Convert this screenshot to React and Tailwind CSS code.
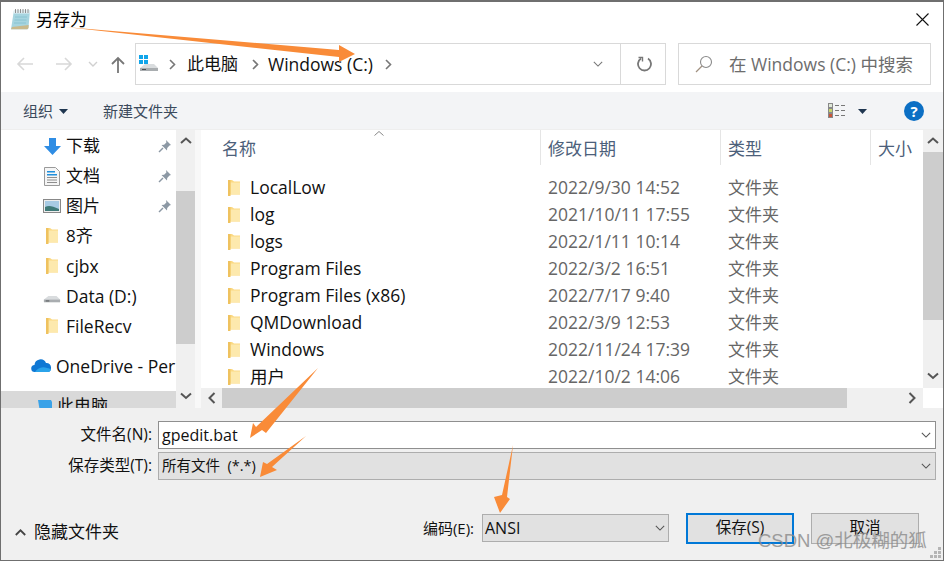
import React from "react";

const FONT = { fontFamily: '"Open Sans","Noto Sans CJK SC",sans-serif' };

function Folder({ className = "" }) {
  return (
    <svg width="14" height="18" viewBox="0 0 14 18" className={className}>
      <path d="M1 1h4l2 1.5h6v13H3.5L1 17z" fill="#fbd984" />
      <path d="M3.5 3.5H13v12H3.5z" fill="#fde9ad" />
      <path d="M1 1h2.5v16L1 17z" fill="#efc25f" />
    </svg>
  );
}

function Pin() {
  return (
    <svg width="14" height="14" viewBox="0 0 14 14">
      <path d="M8 1l5 5-1.5.6-2.3 2.3-.2 2.6-5.5-5.5 2.6-.2L8.4 3.5z" fill="#8c98a4" />
      <path d="M5 9L1 13" stroke="#8c98a4" strokeWidth="1.4" />
    </svg>
  );
}

function Drive({ win = false }) {
  return (
    <svg width="20" height="18" viewBox="0 0 20 18">
      {win && (
        <g fill="#10a5ea">
          <rect x="0" y="0" width="4" height="4" />
          <rect x="5" y="0" width="4" height="4" />
          <rect x="0" y="5" width="4" height="4" />
          <rect x="5" y="5" width="4" height="4" />
        </g>
      )}
      <path d="M1 13l5-4h9l4 4v2H1z" fill="#d9dcde" />
      <path d="M1 13h18v3H1z" fill="#a9adb0" />
      <rect x="3" y="14" width="4" height="1" fill="#4b4f52" />
    </svg>
  );
}

function SbChevron({ dir }) {
  const d = { up: "M1 6l5-4.5L11 6", down: "M1 1.5L6 6l5-4.5" }[dir];
  return (
    <svg width="12" height="8" viewBox="0 0 12 8" fill="none" stroke="#555" strokeWidth="2">
      <path d={d} />
    </svg>
  );
}

function SmallChevron({ color = "#555" }) {
  return (
    <svg width="10" height="6" viewBox="0 0 12 7" fill="none" stroke={color} strokeWidth="1.3">
      <path d="M1 1l5 5 5-5" />
    </svg>
  );
}

function Crumb() {
  return (
    <svg width="7" height="11" viewBox="0 0 7 11" fill="none" stroke="#777" strokeWidth="1.6">
      <path d="M1 1l4.5 4.5L1 10" />
    </svg>
  );
}

function NavBtn({ d, color }) {
  return (
    <svg width="18" height="16" viewBox="0 0 18 16" fill="none" stroke={color} strokeWidth="1.6">
      <path d={d} />
    </svg>
  );
}

function SideRow({ icon, label, pin, latin }) {
  return (
    <div className="h-[30px] shrink-0 flex items-center pl-[42px]">
      <div className="w-[18px] shrink-0 flex justify-center mr-[5px]">{icon}</div>
      <span className={`${latin ? "text-[17.5px]" : "text-[17px]"} text-[#111] flex-1 whitespace-nowrap overflow-hidden`}>{label}</span>
      {pin && <div className="pr-[4px] flex"><Pin /></div>}
    </div>
  );
}

const files = [
  ["LocalLow", "2022/9/30 14:52"],
  ["log", "2021/10/11 17:55"],
  ["logs", "2022/1/11 10:14"],
  ["Program Files", "2022/3/2 16:51"],
  ["Program Files (x86)", "2022/7/17 9:40"],
  ["QMDownload", "2022/3/9 12:53"],
  ["Windows", "2022/11/24 17:39"],
  ["用户", "2022/10/2 14:06"],
];

function FileRow({ name, date }) {
  return (
    <div className="h-[27px] shrink-0 flex items-center whitespace-nowrap">
      <div className="w-[49px] shrink-0 flex pl-[26px]"><Folder /></div>
      <span className="w-[298px] shrink-0 text-[17.5px] text-[#111]">{name}</span>
      <span className="w-[180px] shrink-0 text-[17.5px] text-[#666]">{date}</span>
      <span className="text-[17px] text-[#666]">文件夹</span>
    </div>
  );
}

function Doc() {
  return (
    <svg width="16" height="19" viewBox="0 0 16 19">
      <path d="M.5.5h11l4 4v14H.5z" fill="#f5f5f5" stroke="#9a9a9a" />
      <path d="M3 4h8v1.5H3zM3 7h10v1.5H3z" fill="#1f8fdc" />
      <path d="M3 10h10v1H3zM3 12.5h10v1H3zM3 15h10v1H3z" fill="#8d8d8d" />
    </svg>
  );
}

function Pic() {
  return (
    <svg width="18" height="14" viewBox="0 0 18 14">
      <rect x=".5" y=".5" width="17" height="13" fill="#eee" stroke="#888" />
      <rect x="2" y="2" width="14" height="10" fill="#a8cbe4" />
      <path d="M2 8c4-2 7-1 14 2v2H2z" fill="#3f7a78" />
    </svg>
  );
}

export default function App() {
  return (
    <div style={FONT} className="relative w-[944px] h-[561px] overflow-hidden bg-white border border-[#6f6f6f] border-t-2 flex flex-col">
      {/* title */}
      <div className="h-[41px] shrink-0 flex items-center pl-[9px] pr-[14px] pb-[6px]">
        <svg width="21" height="22" viewBox="0 0 21 22">
          <path d="M4 1h16l-1.500 17.500c0 1-.8 1.800-1.800 1.800H1z" fill="#a6d5e0" />
          <path d="M1 20.300h15.700c1 0 1.800-.8 1.800-1.800l.2-2.500L2 18z" fill="#c9b98c" />
          <path d="M4 1h16l-.3 3.500H3.500z" fill="#e4f0f3" />
          <path d="M5.500 0v4M8 0v4M10.500 0v4M13 0v4M15.500 0v4M18 0v4" stroke="#777" strokeWidth="0.8" />
          <path d="M5 8h12M4.500 11h12M4 14h12" stroke="#84bfce" strokeWidth="0.8" />
        </svg>
        <span className="ml-[5px] text-[17px] text-black">另存为</span>
        <svg width="13" height="13" viewBox="0 0 13 13" className="ml-auto" fill="none" stroke="#111" strokeWidth="1.1">
          <path d="M.5.5l12 12M12.500.5l-12 12" />
        </svg>
      </div>

      {/* nav */}
      <div className="h-[49px] shrink-0 flex items-start pr-[12px]">
        <div className="w-[134px] h-[42px] shrink-0 flex items-center pl-[15px]">
          <NavBtn color="#d8d8d8" d="M17 8H2M8 2L2 8l6 6" />
          <span className="w-[21px]" />
          <NavBtn color="#d8d8d8" d="M1 8h15M10 2l6 6-6 6" />
          <span className="w-[15px]" />
          <svg width="10" height="6" viewBox="0 0 10 6" fill="none" stroke="#d0d0d0" strokeWidth="1.4"><path d="M1 1l4 4 4-4" /></svg>
          <span className="w-[13px]" />
          <svg width="14" height="17" viewBox="0 0 14 17" fill="none" stroke="#777" strokeWidth="1.8"><path d="M7 17V2M1 8l6-6 6 6" /></svg>
        </div>
        <div className="w-[531px] h-[42px] shrink-0 border border-[#d9d9d9] flex items-center">
          <div className="flex items-center pl-[3px] flex-1">
            <Drive win />
            <span className="ml-[10px] flex"><Crumb /></span>
            <span className="ml-[11px] text-[17px] text-[#111]">此电脑</span>
            <span className="ml-[14px] flex"><Crumb /></span>
            <span className="ml-[9px] text-[17.5px] text-[#111]">Windows (C:)</span>
            <span className="ml-[12px] flex"><Crumb /></span>
          </div>
          <div className="w-[45px] h-full flex items-center justify-center">
            <SmallChevron color="#777" />
          </div>
          <div className="w-[45px] h-full border-l border-[#d9d9d9] flex items-center justify-center pl-[3px]">
            <svg width="16" height="16" viewBox="0 0 16 16" fill="none" stroke="#777" strokeWidth="1.8">
              <path d="M4 2.500A6.500 6.500 0 1 0 11 2.500" />
              <path d="M1.500 1.500h4v4" strokeWidth="1.400" />
            </svg>
          </div>
        </div>
        <div className="ml-[12px] flex-1 h-[42px] border border-[#d9d9d9] flex items-center pl-[16px]">
          <svg width="18" height="18" viewBox="0 0 18 18" fill="none" stroke="#8a8a8a" strokeWidth="1.1">
            <circle cx="11" cy="7" r="5.500" />
            <path d="M7 11l-6 6" stroke="#a09080" strokeWidth="1.300" />
          </svg>
          <span className="ml-[16px] text-[17.5px] text-[#6d6d6d] whitespace-nowrap">在 Windows (C:) 中搜索</span>
        </div>
      </div>

      {/* toolbar */}
      <div className="h-[38px] shrink-0 bg-[#f3f4f6] flex items-center pl-[22px] pr-[19px] pt-[1px] border-b border-[#eeeeee]">
        <span className="text-[15px] text-[#3b4a5c]">组织</span>
        <svg width="9" height="5" viewBox="0 0 9 5" className="ml-[6px]"><path d="M0 0h9L4.500 5z" fill="#1f3650" /></svg>
        <span className="ml-[35px] text-[15px] text-[#3b4a5c]">新建文件夹</span>
        <svg width="18" height="16" viewBox="0 0 18 16" className="ml-auto" fill="none">
          <rect x=".5" y=".5" width="4" height="4" stroke="#888" fill="#dfe8d8" />
          <rect x=".5" y="5.500" width="4" height="4" stroke="#888" fill="#c9d66a" />
          <rect x=".5" y="10.500" width="4" height="4" stroke="#888" fill="#c9553a" />
          <path d="M7 2.500h4M13 2.500h4M7 7.500h4M13 7.500h4M7 12.500h4M13 12.500h4" stroke="#777" />
        </svg>
        <svg width="9" height="5" viewBox="0 0 9 5" className="ml-[12px]"><path d="M0 0h9L4.500 5z" fill="#1f3650" /></svg>
        <div className="ml-[37px] w-[20px] h-[20px] rounded-full bg-[#0c6fc4] flex items-center justify-center text-white text-[15px] font-bold leading-none">?</div>
      </div>

      {/* main */}
      <div className="h-[278px] shrink-0 flex overflow-hidden">
        {/* sidebar */}
        <div className="w-[175px] shrink-0 flex flex-col overflow-hidden pt-[1px]">
          <SideRow pin label="下载" icon={
            <svg width="17" height="17" viewBox="0 0 17 17"><path d="M5 0h7v8h5l-8.500 9L0 8h5z" fill="#2f8de4" /></svg>
          } />
          <SideRow pin label="文档" icon={<Doc />} />
          <SideRow pin label="图片" icon={<Pic />} />
          <SideRow label="8齐" icon={<Folder />} />
          <SideRow latin label="cjbx" icon={<Folder />} />
          <SideRow latin label="Data (D:)" icon={<Drive />} />
          <SideRow latin label="FileRecv" icon={<Folder />} />
          <div className="h-[10px] shrink-0" />
          <div className="h-[30px] shrink-0 flex items-center pl-[30px]">
            <svg width="21" height="14" viewBox="0 0 21 14">
              <path d="M4 13a3.500 3.500 0 0 1-.5-7A6 6 0 0 1 15 4a4.500 4.500 0 0 1 5 5c0 2-1 4-3 4z" fill="#0f78d4" />
              <path d="M4 13c2-3 6-6 12-4 2 0 4 1 4 2l-2 2z" fill="#2aa3ea" />
            </svg>
            <span className="ml-[4px] text-[17.5px] text-[#111] whitespace-nowrap">OneDrive - Per</span>
          </div>
          <div className="h-[10px] shrink-0" />
          <div className="h-[30px] shrink-0 bg-[#d9d9d9] flex items-center pl-[37px]">
            <svg width="14" height="12" viewBox="0 0 14 12"><path d="M0 0h13l1 2v10H2z" fill="#3aa2e8" /></svg>
            <span className="ml-[5px] text-[17px] text-[#111]">此电脑</span>
          </div>
        </div>
        {/* sidebar scrollbar */}
        <div className="w-[19px] shrink-0 bg-[#f0f0f0] flex flex-col items-center">
          <div className="h-[21px] shrink-0 flex items-center justify-center"><SbChevron dir="up" /></div>
          <div className="w-full h-[153px] shrink-0 mt-[40px] bg-[#cdcdcd]" />
          <div className="mt-auto h-[24px] shrink-0 flex items-center justify-center"><SbChevron dir="down" /></div>
        </div>
        <div className="w-[6px] shrink-0 bg-[#f8f8f8]" />
        {/* file list */}
        <div className="flex-1 min-w-0 flex flex-col">
          <div className="flex-1 min-h-0 flex">
            <div className="flex-1 min-w-0 flex flex-col overflow-hidden">
              <div className="h-[44px] shrink-0 flex relative">
                <div className="w-[340px] h-[35px] pt-[2px] shrink-0 border-r border-[#e5e5e5] pl-[21px] flex items-center text-[17px] text-[#4c607a]">名称</div>
                <div className="w-[180px] h-[35px] pt-[2px] shrink-0 border-r border-[#e5e5e5] pl-[7px] flex items-center text-[17px] text-[#4c607a]">修改日期</div>
                <div className="w-[150px] h-[35px] pt-[2px] shrink-0 border-r border-[#e5e5e5] pl-[7px] flex items-center text-[17px] text-[#4c607a]">类型</div>
                <div className="pl-[7px] h-[35px] pt-[2px] flex items-center text-[17px] text-[#4c607a] whitespace-nowrap">大小</div>
                <svg width="10" height="5" viewBox="0 0 10 5" className="absolute left-[173px] top-[1px]" fill="none" stroke="#888"><path d="M0.500 4.500L5 .5l4.500 4" /></svg>
              </div>
              <div className="flex flex-col">
                {files.map(([n, d]) => <FileRow key={n} name={n} date={d} />)}
              </div>
            </div>
            <div className="w-[20px] shrink-0 bg-[#f0f0f0] flex flex-col items-center">
              <div className="h-[22px] shrink-0 flex items-center justify-center"><SbChevron dir="up" /></div>
              <div className="w-full h-[168px] shrink-0 bg-[#cdcdcd]" />
              <div className="mt-auto h-[24px] shrink-0 flex items-center justify-center"><SbChevron dir="down" /></div>
            </div>
          </div>
          <div className="h-[20px] shrink-0 bg-[#f0f0f0] flex items-center mr-[20px]">
            <div className="w-[21px] h-full shrink-0 flex items-center justify-center">
              <svg width="8" height="12" viewBox="0 0 8 12" fill="none" stroke="#555" strokeWidth="2"><path d="M6.500 1L1.500 6l5 5" /></svg>
            </div>
            <div className="w-[625px] h-full shrink-0 bg-[#cdcdcd]" />
            <div className="ml-auto w-[23px] h-full flex items-center justify-center">
              <svg width="8" height="12" viewBox="0 0 8 12" fill="none" stroke="#555" strokeWidth="2"><path d="M1.500 1l5 5-5 5" /></svg>
            </div>
          </div>
        </div>
      </div>

      {/* bottom */}
      <div className="flex-1 min-h-0 bg-[#f0f0f0] flex flex-col pr-[7px]">
        <div className="h-[28px] mt-[13px] shrink-0 flex items-center">
          <label className="w-[151px] shrink-0 text-right text-[15.5px] text-[#111]">文件名(N):</label>
          <div className="ml-[6px] flex-1 h-full bg-white border border-[#8f8f8f] flex items-center pl-[3px] pr-[4px]">
            <span className="text-[16px] text-[#111]">gpedit.bat</span>
            <span className="ml-auto flex"><SmallChevron /></span>
          </div>
        </div>
        <div className="h-[28px] mt-[3px] shrink-0 flex items-center">
          <label className="w-[151px] shrink-0 text-right text-[15.5px] text-[#111]">保存类型(T):</label>
          <div className="ml-[6px] flex-1 h-full bg-[#e1e1e1] border border-[#adadad] flex items-center pl-[3px] pr-[4px]">
            <span className="text-[14.500px] text-[#111] whitespace-pre">所有文件  (*.*)</span>
            <span className="ml-auto flex"><SmallChevron /></span>
          </div>
        </div>
        <div className="mt-[32px] h-[32px] shrink-0 flex items-center pl-[14px] pr-[17px]">
          <svg width="11" height="7" viewBox="0 0 11 7" fill="none" stroke="#444" strokeWidth="1.800" className="mt-[8px]"><path d="M.8 6l4.700-4.700L10.200 6" /></svg>
          <span className="ml-[8px] mt-[8px] text-[17px] text-[#111]">隐藏文件夹</span>
          <span className="ml-auto text-[15px] text-[#111]">编码(E):</span>
          <div className="ml-[8px] w-[187px] h-[28px] bg-[#e1e1e1] border border-[#adadad] flex items-center pl-[2px] pr-[3px]">
            <span className="text-[16px] text-[#111]">ANSI</span>
            <span className="ml-auto flex"><SmallChevron /></span>
          </div>
          <div className="ml-[17px] w-[108px] h-[31px] bg-[#e1e1e1] border-2 border-[#0078d7] flex items-center justify-center text-[15.500px] text-[#111]">保存(S)</div>
          <div className="ml-[17px] w-[108px] h-[31px] bg-[#e1e1e1] border border-[#adadad] flex items-center justify-center text-[15.500px] text-[#111]">取消</div>
        </div>
      </div>

      {/* annotation arrows */}
      <svg width="944" height="561" viewBox="0 0 944 561" className="absolute left-[-1px] top-[-2px] pointer-events-none">
        <g fill="#f98b38">
          <polygon points="65,27 339,50 339,45 355,54 339,62 339,57" />
          <polygon points="318,368 266,433 262,430 250,438 253,423 256,427" />
          <polygon points="306,436 272,467 277,470 260,477 263,462 267,464" />
          <polygon points="513,445 507,497 510,499 500,513 494,497 502,495" />
        </g>
      </svg>

      {/* watermark */}
      <span className="absolute left-[757px] top-[530px] text-[18.5px] leading-none whitespace-nowrap text-[#8a8a8a] opacity-80" style={{ fontFamily: '"Liberation Sans","Noto Sans CJK SC",sans-serif' }}>CSDN @北极糊的狐</span>

      {/* resize grip */}
      <svg width="12" height="12" viewBox="0 0 12 12" className="absolute right-[1px] bottom-[1px]" fill="#b5b5b5">
        <rect x="8" y="0" width="3" height="3" />
        <rect x="4" y="4" width="3" height="3" />
        <rect x="8" y="4" width="3" height="3" />
        <rect x="0" y="8" width="3" height="3" />
        <rect x="4" y="8" width="3" height="3" />
        <rect x="8" y="8" width="3" height="3" />
      </svg>
    </div>
  );
}
